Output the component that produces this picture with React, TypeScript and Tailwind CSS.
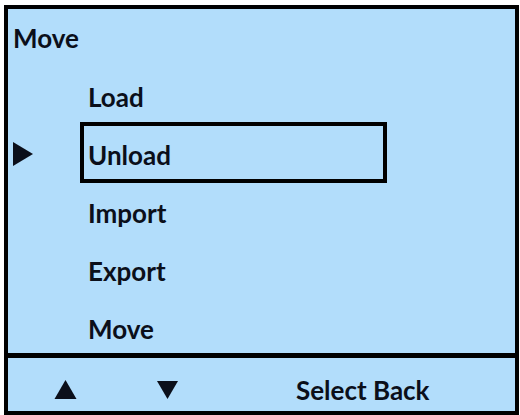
import React from "react";

const items = ["Load", "Unload", "Import", "Export", "Move"];

const Tri = ({ dir, className }: { dir: "up" | "down" | "right"; className?: string }) => {
  const pts =
    dir === "up" ? "0,19 11,0 22,19" : dir === "down" ? "0,0 22,0 11,19" : "0,0 20,12 0,24";
  const box = dir === "right" ? "0 0 20 24" : "0 0 22 19";
  return (
    <svg viewBox={box} className={className}>
      <polygon points={pts} fill="#0b0f1a" />
    </svg>
  );
};

const App = () => {
  const selected = 1;

  return (
    <div
      className="w-[520px] h-[415px] bg-white pt-[5px] pl-[4px] pr-[1px] text-[#0b0f1a]"
      style={{ fontFamily: "Lato, 'Open Sans', sans-serif" }}
    >
      <div className="h-[410px] border-4 border-black bg-[#b2ddfb] flex flex-col">
        <div className="h-[344px] shrink-0 flex flex-col">
          <div className="h-[56px] shrink-0 flex items-center pl-[5px] pt-[2px] text-[26px] font-bold leading-none">
            Move
          </div>
          {items.map((item, i) => (
            <div key={item} className="h-[58px] shrink-0 flex items-center">
              <div className="w-[72px] shrink-0 pl-[5px] flex items-center pt-[4px]">
                {i === selected && <Tri dir="right" className="w-[20px] h-[24px]" />}
              </div>
              <div
                className={
                  "w-[307px] h-[61px] shrink-0 flex items-center pl-[4px] pt-[6px] text-[26px] font-bold leading-none border-4 " +
                  (i === selected ? "border-black" : "border-transparent")
                }
              >
                {item}
              </div>
            </div>
          ))}
        </div>
        <div className="flex-1 border-t-[5px] border-black flex items-center pl-[45px] pt-[10px]">
          <Tri dir="up" className="w-[25px] h-[19px]" />
          <Tri dir="down" className="w-[21px] h-[20px] ml-[79px]" />
          <span className="ml-[118px] text-[26px] font-bold leading-none">Select Back</span>
        </div>
      </div>
    </div>
  );
};

export default App;
